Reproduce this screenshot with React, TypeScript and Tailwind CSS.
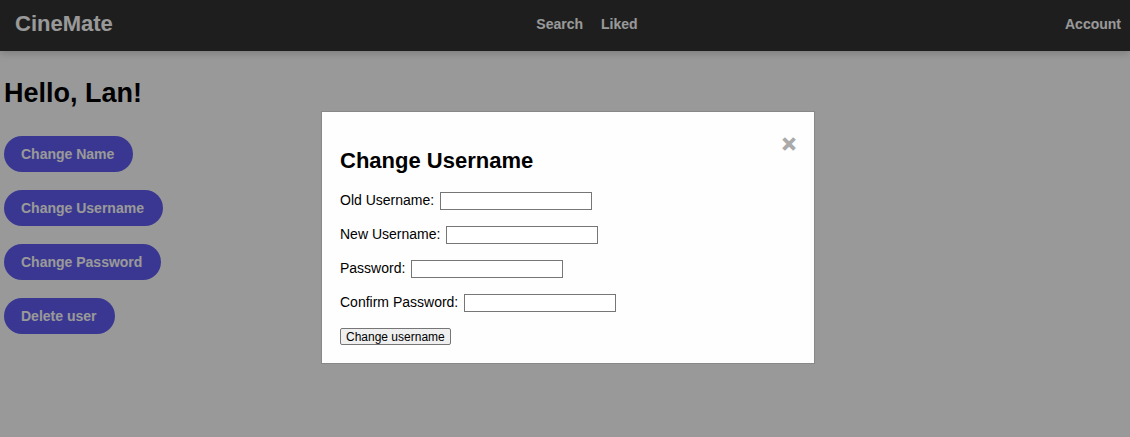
import { useState } from "react";

const navLink = "text-white hover:underline";

const actions = ["Change Name", "Change Username", "Change Password", "Delete user"];

const fields = [
  { id: "old-username", label: "Old Username:", type: "text" },
  { id: "new-username", label: "New Username:", type: "text" },
  { id: "password", label: "Password:", type: "password" },
  { id: "confirm-password", label: "Confirm Password:", type: "password" },
];

function Header() {
  return (
    <header className="grid h-[51px] grid-cols-[1fr_auto_1fr] items-center bg-[#333] pr-[9px] pl-[15px] text-sm font-bold text-white shadow-[0_2px_8px_rgba(0,0,0,0.2)]">
      <a href="#home" className="justify-self-start pb-1 text-[22px] leading-7">
        CineMate
      </a>
      <nav className="flex gap-[18px] pb-1 pl-[38px]">
        <a href="#search" className={navLink}>Search</a>
        <a href="#liked" className={navLink}>Liked</a>
      </nav>
      <a href="#account" className="justify-self-end pb-1 hover:underline">
        Account
      </a>
    </header>
  );
}

function UsernameDialog({ onClose }: { onClose: () => void }) {
  return (
    <div className="fixed inset-0 flex items-start justify-center bg-black/40 pt-[111px] pl-1.5">
      <section
        role="dialog"
        aria-modal="true"
        aria-labelledby="dialog-title"
        className="flex w-[494px] max-w-full flex-col border border-[#888] bg-[#fefefe] p-[18px]"
      >
        <button
          type="button"
          aria-label="Close"
          onClick={onClose}
          className="h-[18px] self-end text-2xl leading-7 font-bold text-[#aaa] [-webkit-text-stroke:1px_#aaa] hover:text-black"
        >
          &times;
        </button>
        <h2 id="dialog-title" className="text-[22px] leading-[26px] font-bold">
          Change Username
        </h2>
        <form
          className="flex flex-col items-start gap-4 pt-[18px]"
          onSubmit={(event) => event.preventDefault()}
        >
          {fields.map((field) => (
            <div key={field.id} className="flex h-[18px] items-start gap-1.5">
              <label htmlFor={field.id} className="leading-4">{field.label}</label>
              <input
                id={field.id}
                type={field.type}
                className="h-[18px] w-[152px] border border-[#767676] bg-white px-0.5 text-xs"
              />
            </div>
          ))}
          <button
            type="submit"
            className="h-[17px] rounded-[2px] border border-[#767676] bg-[#efefef] px-[5px] text-xs leading-4"
          >
            Change username
          </button>
        </form>
      </section>
    </div>
  );
}

export default function App() {
  const [open, setOpen] = useState(true);

  return (
    <div className="min-h-screen bg-white font-['Liberation_Sans',Arial,sans-serif] text-sm text-black">
      <Header />
      <main className="flex flex-col items-start gap-[18px] px-1 pt-6">
        <h1 className="pb-1.5 text-[27px] leading-[37px] font-bold">Hello, Lan!</h1>
        {actions.map((action) => (
          <button
            key={action}
            type="button"
            onClick={() => setOpen(true)}
            className="h-9 rounded-full bg-[#605df2] pr-[19px] pl-[17px] text-sm font-bold text-white"
          >
            {action}
          </button>
        ))}
      </main>
      {open && <UsernameDialog onClose={() => setOpen(false)} />}
    </div>
  );
}
